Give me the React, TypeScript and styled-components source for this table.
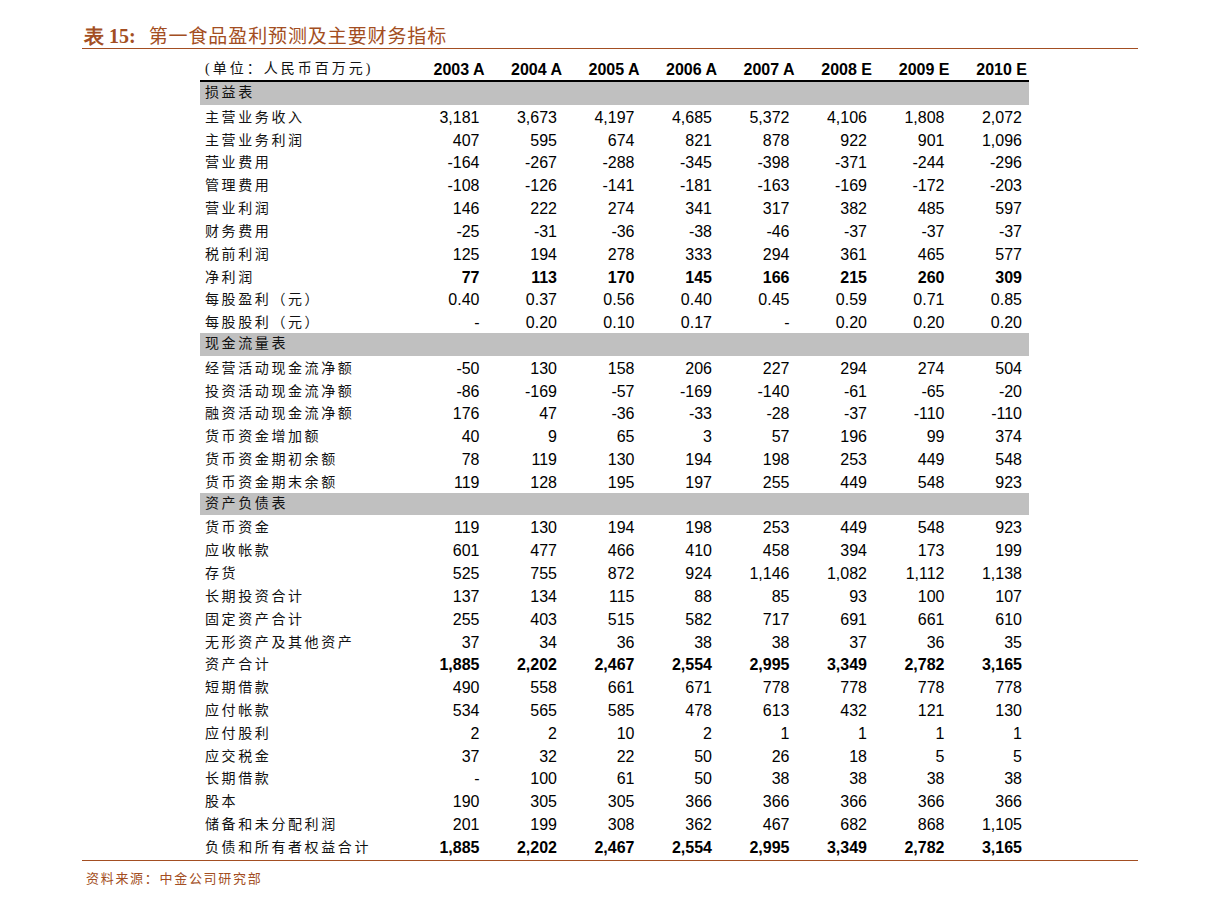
import React from "react";
import styled, { createGlobalStyle } from "styled-components";

const GlobalStyle = createGlobalStyle`
  body {
    margin: 0;
    background: #ffffff;
  }
`;

const BROWN = "#a34e22";
const CJK = `"Noto Sans CJK SC", "Noto Sans", sans-serif`;
const NUM = `"Liberation Sans", Arial, sans-serif`;

const Page = styled.div`
  width: 1056px;
  padding: 21px 0 0 82px;
`;

const Title = styled.div`
  display: flex;
  align-items: baseline;
  gap: 13px;
  color: ${BROWN};
  height: 27px;
  padding-left: 2px;
  border-bottom: 1px solid ${BROWN};
`;

const TitleNo = styled.span`
  font-weight: bold;
  font-family: "Liberation Serif", serif;
  font-size: 20px;
`;

const TitleText = styled.span`
  font-family: ${CJK};
  font-size: 19px;
  letter-spacing: 0.9px;
`;

const Table = styled.div`
  margin: 9px 0 0 118px;
  width: 829px;
`;

const Row = styled.div<{ $head?: boolean; $section?: boolean }>`
  display: grid;
  grid-template-columns: 209px repeat(8, 77.5px);
  height: ${(p) => (p.$head ? "24px" : "22.82px")};
  align-items: center;
  padding-bottom: ${(p) => (p.$head ? "0" : "8px")};
  box-sizing: border-box;
  background: ${(p) => (p.$section ? "#c0c0c0" : "transparent")};
  border-bottom: ${(p) => (p.$head ? "2px solid #000" : "none")};
`;

const Label = styled.div<{ $head?: boolean }>`
  font-family: ${(p) => (p.$head ? `"Liberation Serif", ${CJK}` : CJK)};
  font-size: 14px;
  letter-spacing: ${(p) => (p.$head ? "3px" : "2.6px")};
  padding-left: 5px;
  color: #111;
  white-space: nowrap;
  line-height: 18px;
`;

const HeadCell = styled.div`
  font-family: ${NUM};
  font-weight: bold;
  font-size: 16px;
  text-align: right;
  padding-right: 2px;
  margin-top: 2px;
  color: #000;
`;

const Cell = styled.div<{ $bold?: boolean }>`
  font-family: ${NUM};
  font-size: 16px;
  font-weight: ${(p) => (p.$bold ? "bold" : "normal")};
  text-align: right;
  padding-right: 7px;
  margin-top: 4px;
  color: #000;
  line-height: 18px;
`;

const BottomRule = styled.div`
  border-top: 1px solid ${BROWN};
  margin-top: 2px;
`;

const Source = styled.div`
  color: ${BROWN};
  font-family: ${CJK};
  font-size: 13px;
  letter-spacing: 1.7px;
  padding: 7px 0 0 4px;
`;

type Line =
  | { kind: "section"; label: string }
  | { kind: "data"; label: string; values: string[]; bold?: boolean };

const years = ["2003 A", "2004 A", "2005 A", "2006 A", "2007 A", "2008 E", "2009 E", "2010 E"];

const d = (label: string, v: string, bold?: boolean): Line => ({
  kind: "data",
  label,
  values: v.split(" "),
  bold,
});

const lines: Line[] = [
  { kind: "section", label: "损益表" },
  d("主营业务收入", "3,181 3,673 4,197 4,685 5,372 4,106 1,808 2,072"),
  d("主营业务利润", "407 595 674 821 878 922 901 1,096"),
  d("营业费用", "-164 -267 -288 -345 -398 -371 -244 -296"),
  d("管理费用", "-108 -126 -141 -181 -163 -169 -172 -203"),
  d("营业利润", "146 222 274 341 317 382 485 597"),
  d("财务费用", "-25 -31 -36 -38 -46 -37 -37 -37"),
  d("税前利润", "125 194 278 333 294 361 465 577"),
  d("净利润", "77 113 170 145 166 215 260 309", true),
  d("每股盈利（元）", "0.40 0.37 0.56 0.40 0.45 0.59 0.71 0.85"),
  d("每股股利（元）", "- 0.20 0.10 0.17 - 0.20 0.20 0.20"),
  { kind: "section", label: "现金流量表" },
  d("经营活动现金流净额", "-50 130 158 206 227 294 274 504"),
  d("投资活动现金流净额", "-86 -169 -57 -169 -140 -61 -65 -20"),
  d("融资活动现金流净额", "176 47 -36 -33 -28 -37 -110 -110"),
  d("货币资金增加额", "40 9 65 3 57 196 99 374"),
  d("货币资金期初余额", "78 119 130 194 198 253 449 548"),
  d("货币资金期末余额", "119 128 195 197 255 449 548 923"),
  { kind: "section", label: "资产负债表" },
  d("货币资金", "119 130 194 198 253 449 548 923"),
  d("应收帐款", "601 477 466 410 458 394 173 199"),
  d("存货", "525 755 872 924 1,146 1,082 1,112 1,138"),
  d("长期投资合计", "137 134 115 88 85 93 100 107"),
  d("固定资产合计", "255 403 515 582 717 691 661 610"),
  d("无形资产及其他资产", "37 34 36 38 38 37 36 35"),
  d("资产合计", "1,885 2,202 2,467 2,554 2,995 3,349 2,782 3,165", true),
  d("短期借款", "490 558 661 671 778 778 778 778"),
  d("应付帐款", "534 565 585 478 613 432 121 130"),
  d("应付股利", "2 2 10 2 1 1 1 1"),
  d("应交税金", "37 32 22 50 26 18 5 5"),
  d("长期借款", "- 100 61 50 38 38 38 38"),
  d("股本", "190 305 305 366 366 366 366 366"),
  d("储备和未分配利润", "201 199 308 362 467 682 868 1,105"),
  d("负债和所有者权益合计", "1,885 2,202 2,467 2,554 2,995 3,349 2,782 3,165", true),
];

export default function App() {
  return (
    <>
      <GlobalStyle />
      <Page>
        <Title>
          <TitleNo>表 15:</TitleNo>
          <TitleText>第一食品盈利预测及主要财务指标</TitleText>
        </Title>
        <Table>
          <Row $head>
            <Label $head>(单位：人民币百万元)</Label>
            {years.map((y) => (
              <HeadCell key={y}>{y}</HeadCell>
            ))}
          </Row>
          {lines.map((l, i) =>
            l.kind === "section" ? (
              <Row key={i} $section>
                <Label>{l.label}</Label>
              </Row>
            ) : (
              <Row key={i}>
                <Label>{l.label}</Label>
                {l.values.map((v, j) => (
                  <Cell key={j} $bold={l.bold}>
                    {v}
                  </Cell>
                ))}
              </Row>
            )
          )}
        </Table>
        <BottomRule />
        <Source>资料来源：中金公司研究部</Source>
      </Page>
    </>
  );
}
